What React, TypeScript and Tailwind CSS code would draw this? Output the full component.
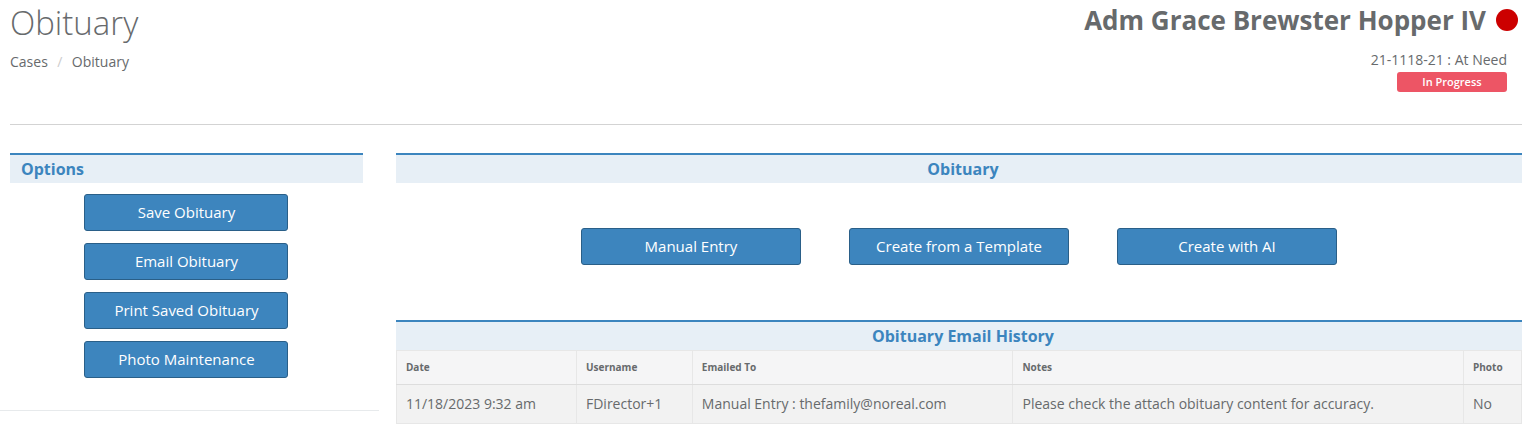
import type { ReactNode } from 'react';

const OPTIONS = ['Save Obituary', 'Email Obituary', 'Print Saved Obituary', 'Photo Maintenance'];

const ENTRY_MODES = ['Manual Entry', 'Create from a Template', 'Create with AI'];

const COLUMNS = [
  { label: 'Date', width: 'w-[16%]' },
  { label: 'Username', width: 'w-[10.3%]' },
  { label: 'Emailed To', width: 'w-[28.5%]' },
  { label: 'Notes', width: '' },
  { label: 'Photo', width: 'w-[58px]' },
];

const HISTORY = [
  {
    date: '11/18/2023 9:32 am',
    username: 'FDirector+1',
    emailedTo: 'Manual Entry : thefamily@noreal.com',
    notes: 'Please check the attach obituary content for accuracy.',
    photo: 'No',
  },
];

function SectionTitle({ children, left }: { children: ReactNode; left?: boolean }) {
  return (
    <h2
      className={`border-t-2 border-[#3c85be] bg-[#e7eff6] pr-[3px] pl-[11px] text-base leading-7 font-bold text-[#3c85be] ${
        left ? 'text-left' : 'text-center'
      }`}
    >
      {children}
    </h2>
  );
}

function ActionButton({ label, width }: { label: string; width: string }) {
  return (
    <button
      type="button"
      className={`h-[37px] rounded-[3px] border border-[#2a5f88] bg-[#3d85be] text-[15px] font-medium text-white hover:bg-[#3576aa] ${width}`}
    >
      {label}
    </button>
  );
}

export default function App() {
  return (
    <main className="bg-white pr-2 font-['Open_Sans',sans-serif] text-sm text-[#676a6c]">
      <header className="ml-[10px] flex h-[125px] justify-between border-b border-[#d3d3d3]">
        <div>
          <h1 className="pt-0.5 text-[33px] leading-[42px] font-light">Obituary</h1>
          <nav className="mt-2 flex leading-5">
            <a href="#cases">Cases</a>
            <span className="w-6 text-center text-[#cccccc]">/</span>
            <a href="#obituary">Obituary</a>
          </nav>
        </div>
        <div className="flex flex-col items-end">
          <div className="flex items-center gap-2.5 pr-1">
            <span className="text-[26px] leading-10 font-bold">Adm Grace Brewster Hopper IV</span>
            <span className="size-[22px] rounded-full bg-[#cc0000]" />
          </div>
          <div className="mt-2.5 mr-[15px] leading-5">21-1118-21 : At Need</div>
          <span className="mt-0.5 mr-[15px] h-5 w-[110px] rounded-[3px] bg-[#ed5565] text-center text-[11px] leading-5 font-semibold text-white">
            In Progress
          </span>
        </div>
      </header>

      <div className="mt-7 flex items-start gap-[17px]">
        <aside className="w-[24.9%] border-b border-[#e7eaec] pr-4 pb-8">
          <div className="ml-[10px]">
            <SectionTitle left>Options</SectionTitle>
            <div className="flex flex-col items-center gap-3 pt-[11px]">
              {OPTIONS.map((label) => (
                <ActionButton key={label} label={label} width="w-[204px]" />
              ))}
            </div>
          </div>
        </aside>

        <div className="min-w-0 flex-1">
          <section>
            <SectionTitle>Obituary</SectionTitle>
            <div className="flex justify-center gap-12 pt-[45px] pb-[55px]">
              {ENTRY_MODES.map((label) => (
                <ActionButton key={label} label={label} width="w-[220px]" />
              ))}
            </div>
          </section>

          <section>
            <SectionTitle>Obituary Email History</SectionTitle>
            <table className="w-full table-fixed border-collapse text-left">
              <thead>
                <tr className="h-[34px] bg-[#f5f5f6] text-[10px]">
                  {COLUMNS.map((c) => (
                    <th key={c.label} className={`border border-[#e7e7e7] border-b-[#dddddd] px-[9px] font-bold ${c.width}`}>
                      {c.label}
                    </th>
                  ))}
                </tr>
              </thead>
              <tbody>
                {HISTORY.map((row) => (
                  <tr key={row.date} className="h-[39px] bg-[#f2f2f2]">
                    {Object.values(row).map((value, i) => (
                      <td key={i} className="border border-[#e7e7e7] px-[9px]">
                        {value}
                      </td>
                    ))}
                  </tr>
                ))}
              </tbody>
            </table>
          </section>
        </div>
      </div>
    </main>
  );
}
